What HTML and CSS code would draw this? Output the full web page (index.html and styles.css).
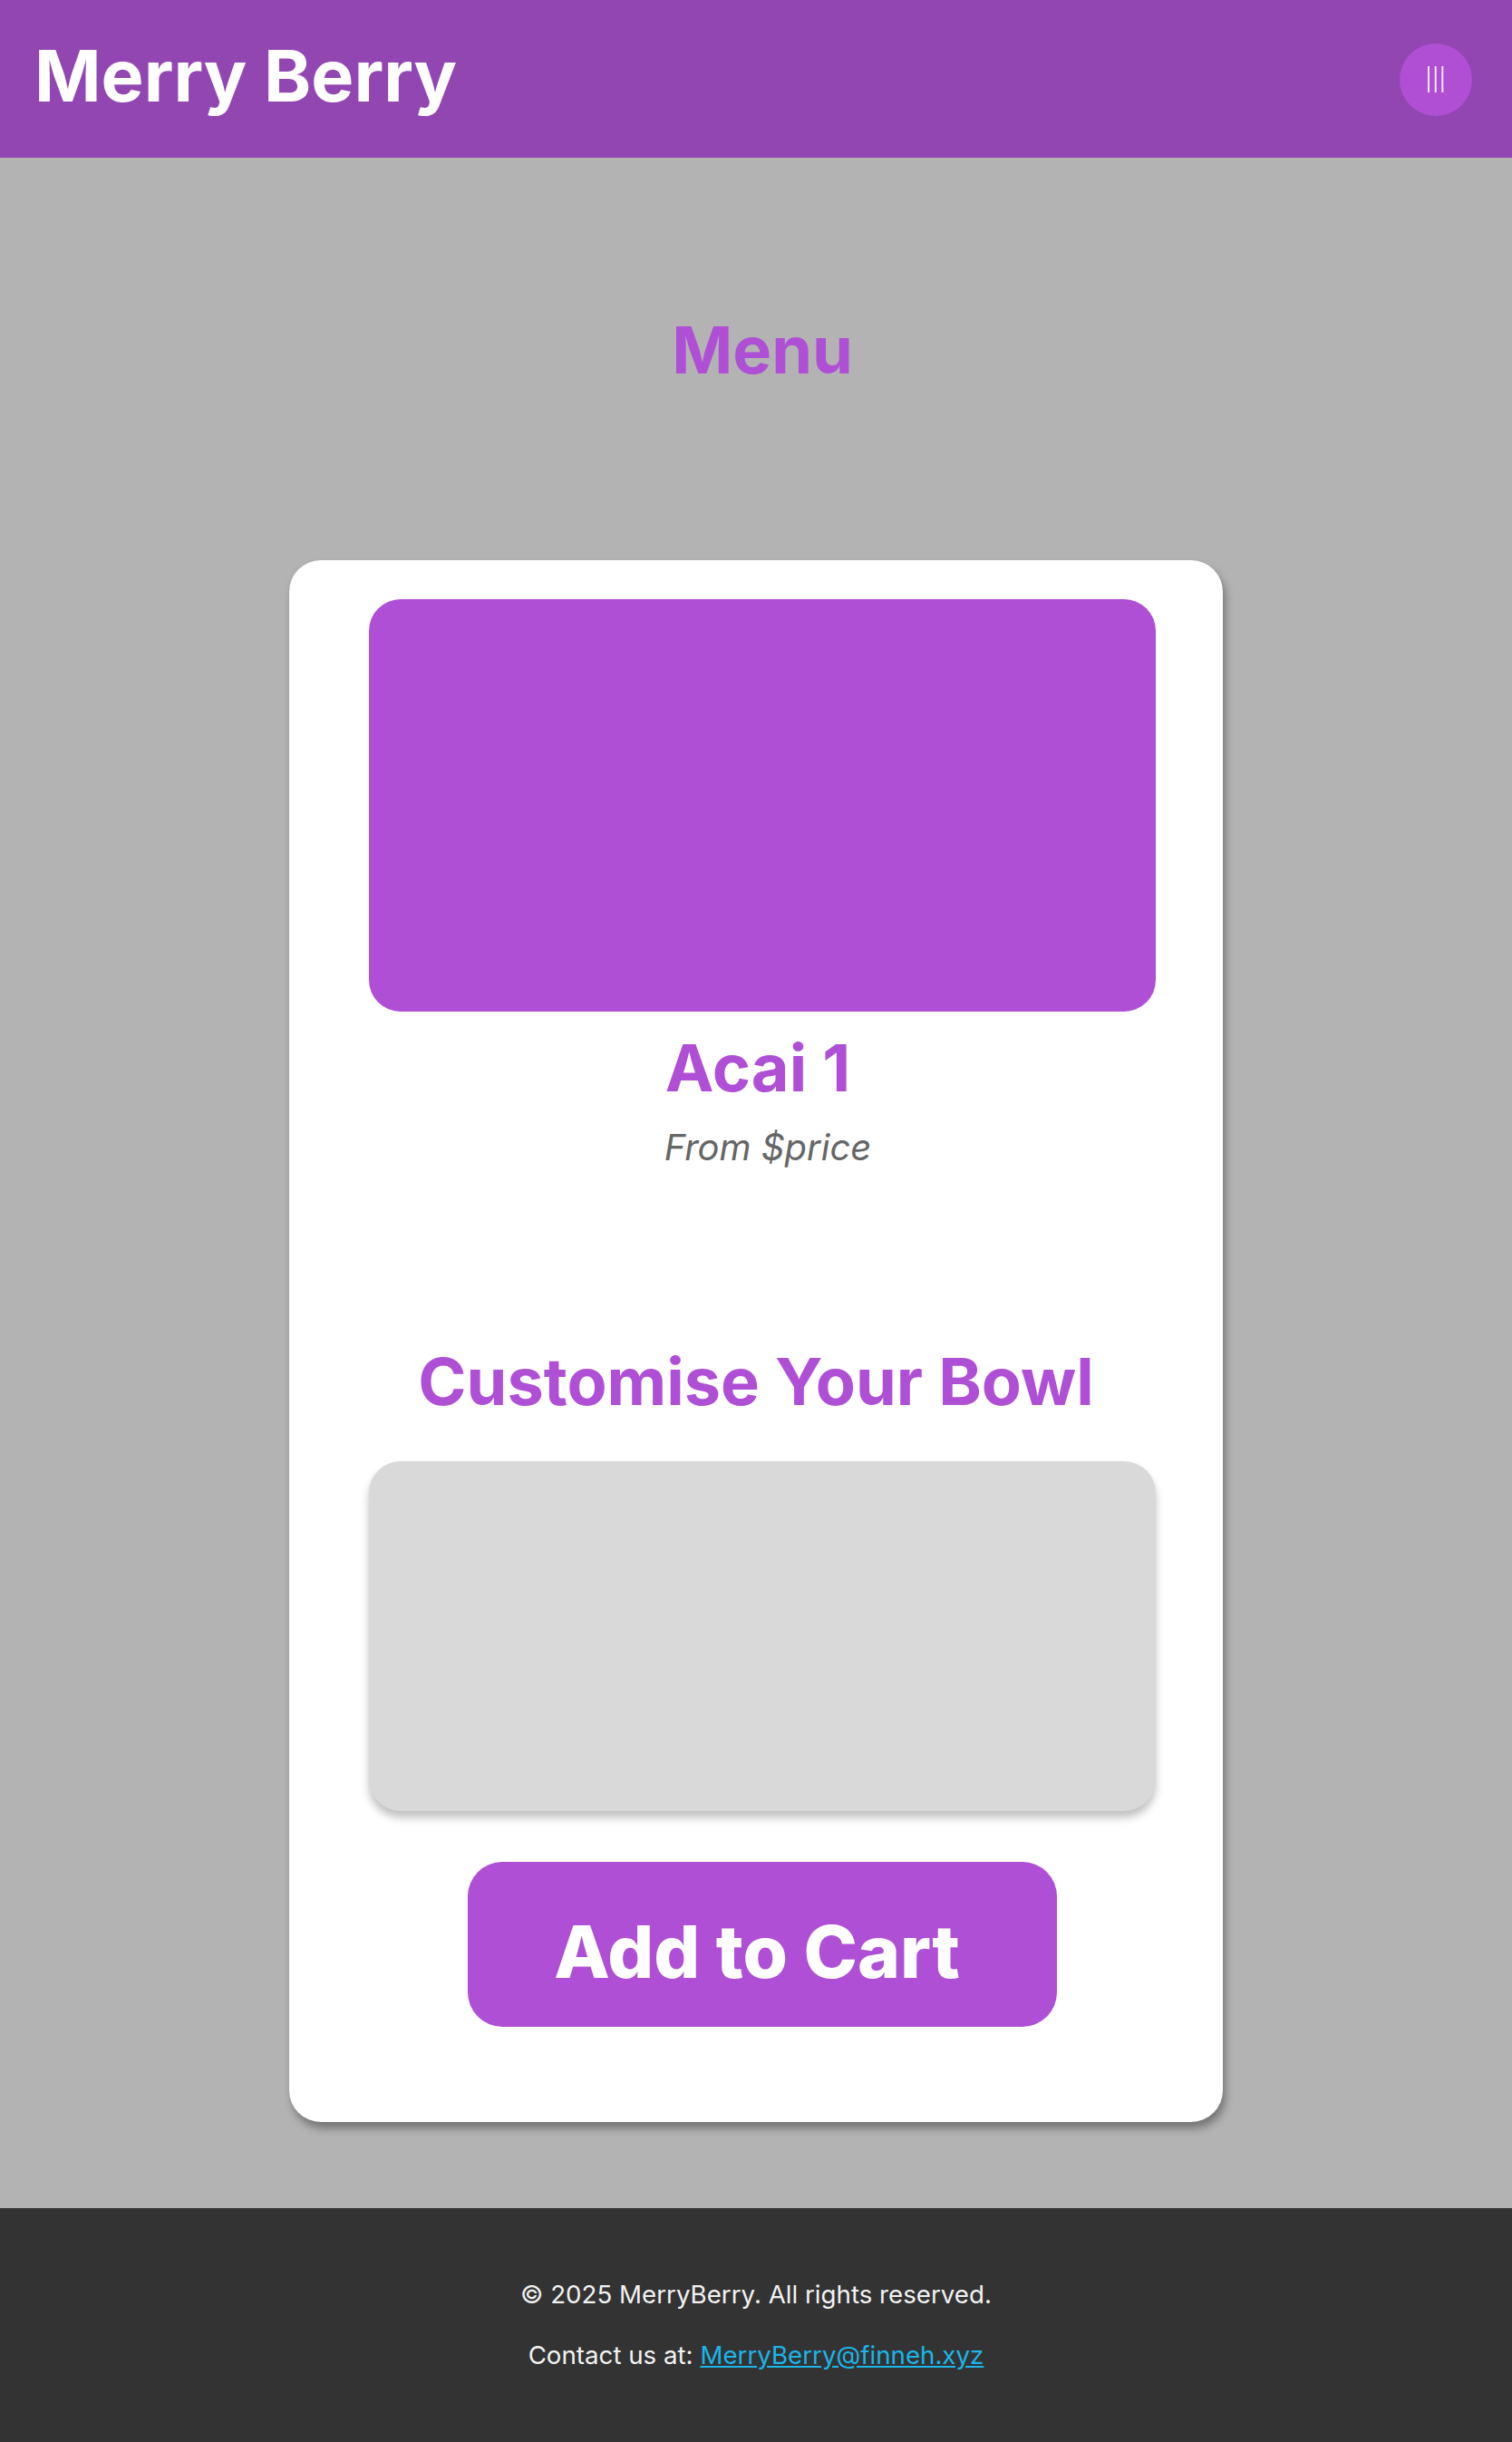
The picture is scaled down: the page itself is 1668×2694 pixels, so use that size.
FILE: index.html
```html
<!DOCTYPE html>
<html lang="en">
<head>
<meta charset="utf-8">
<title>Merry Berry - Menu</title>
<link rel="stylesheet" href="styles.css">
</head>
<body>
<header class="site-header">
  <h1 class="brand">Merry Berry</h1>
  <button class="menu-btn" aria-label="Open menu">
    <svg class="menu-icon" viewBox="0 0 20 30" width="20" height="30" aria-hidden="true">
      <line x1="2" y1="0" x2="2" y2="29"/>
      <line x1="9.7" y1="0" x2="9.7" y2="29"/>
      <line x1="17.3" y1="0" x2="17.3" y2="29"/>
    </svg>
  </button>
</header>

<main class="page">
  <h2 class="page-title">Menu</h2>

  <section class="card">
    <div class="item-image"></div>
    <h3 class="item-name">Acai 1</h3>
    <p class="item-price">From $price</p>

    <h3 class="section-title">Customise Your Bowl</h3>
    <div class="options-box"></div>

    <button class="cart-btn">Add to Cart</button>
  </section>
</main>

<footer class="site-footer">
  <p>© 2025 MerryBerry. All rights reserved.</p>
  <p>Contact us at: <a href="#">MerryBerry@finneh.xyz</a></p>
</footer>
</body>
</html>
```

FILE: styles.css
```css
* {
  box-sizing: border-box;
}

html, body {
  margin: 0;
  padding: 0;
}

body {
  font-family: Inter, "Noto Sans", "Liberation Sans", sans-serif;
  background: #b3b3b3;
}

.site-header {
  height: 174px;
  background: #9146b1;
  display: flex;
  align-items: center;
  justify-content: space-between;
  padding: 0 44px 0 38px;
}

.brand {
  margin: 0 0 7px 0;
  font-size: 79px;
  font-weight: 700;
  color: #ffffff;
  line-height: 97px;
}

.menu-btn {
  width: 80px;
  height: 80px;
  border: none;
  border-radius: 50%;
  background: #b04fd4;
  display: flex;
  align-items: center;
  justify-content: center;
  padding: 0;
  margin-top: 2px;
}

.menu-icon line {
  stroke: #f4e8f8;
  stroke-width: 2;
}

.page {
  padding: 168px 0 95px;
}

.page-title {
  margin: 0 0 189px;
  padding-left: 14px;
  text-align: center;
  font-size: 72px;
  font-weight: 700;
  line-height: 87px;
  color: #af4fd5;
}

.card {
  width: 1030px;
  margin: 0 auto;
  background: #ffffff;
  border-radius: 35px;
  padding: 43px 74px 105px 88px;
  box-shadow: 3px 7px 10px rgba(0, 0, 0, 0.35);
  display: flex;
  flex-direction: column;
  align-items: center;
}

.item-image {
  width: 100%;
  height: 455px;
  border-radius: 35px;
  background: #af4fd5;
}

.item-name {
  margin: 18px -4px 0 -14px;
  align-self: stretch;
  text-align: center;
  font-size: 72px;
  font-weight: 700;
  line-height: 87px;
  color: #af4fd5;
}

.item-price {
  margin: 21px 0 0 0;
  padding-left: 12px;
  align-self: stretch;
  text-align: center;
  font-size: 40px;
  font-style: italic;
  line-height: 48px;
  color: #666666;
}

.section-title {
  margin: 190px 0 0 -14px;
  align-self: stretch;
  text-align: center;
  font-size: 72px;
  font-weight: 700;
  line-height: 87px;
  color: #af4fd5;
}

.options-box {
  width: 100%;
  height: 386px;
  margin-top: 45px;
  border-radius: 35px;
  background: #d9d9d9;
  box-shadow: 0 7px 10px rgba(0, 0, 0, 0.25);
}

.cart-btn {
  margin-top: 56px;
  width: 650px;
  height: 182px;
  border: none;
  border-radius: 38px;
  background: #af4fd5;
  color: #ffffff;
  font-family: Inter, "Noto Sans", "Liberation Sans", sans-serif;
  font-size: 80px;
  font-weight: 800;
  line-height: 97px;
  padding: 50px 12px 35px 0;
}

.site-footer {
  background: #333333;
  color: #f2f2f2;
  text-align: center;
  padding: 48px 0;
  font-size: 27.7px;
  line-height: 39px;
}

.site-footer p {
  margin: 28px 0;
}

.site-footer a {
  color: #1ab6e8;
  text-decoration: underline;
}
```
